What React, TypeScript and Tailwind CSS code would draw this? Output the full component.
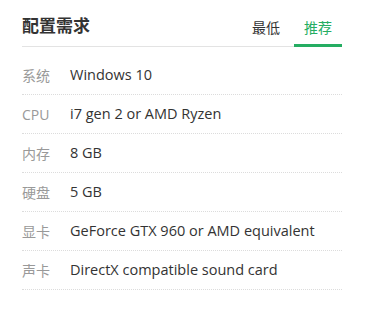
import { useState } from "react";

// System requirements card with min / recommended tabs.
const specs: [string, string][] = [
  ["系统", "Windows 10"],
  ["CPU", "i7 gen 2 or AMD Ryzen"],
  ["内存", "8 GB"],
  ["硬盘", "5 GB"],
  ["显卡", "GeForce GTX 960 or AMD equivalent"],
  ["声卡", "DirectX compatible sound card"],
];

export default function App() {
  const [tab, setTab] = useState<"min" | "rec">("rec");

  return (
    <div className="h-[319px] w-[373px] bg-white font-['Open_Sans','Noto_Sans_CJK_SC',sans-serif] text-[#333]">
      <div className="ml-[22px] w-[320px]">
        <div className="flex h-[47px] justify-between border-b border-[#e3e3e3]">
          <h2 className="pt-[14px] text-[17px] font-bold leading-[24px]">配置需求</h2>
          <div className="-mb-px flex gap-[4px] self-end">
            <button
              onClick={() => setTab("min")}
              className={`flex h-[37px] w-[48px] items-center justify-center border-b-[3px] text-[14px] ${tab === "min" ? "border-[#25ad62] text-[#25ad62]" : "border-transparent text-[#333]"}`}
            >
              最低
            </button>
            <button
              onClick={() => setTab("rec")}
              className={`flex h-[37px] w-[48px] items-center justify-center border-b-[3px] text-[14px] ${tab === "rec" ? "border-[#25ad62] text-[#25ad62]" : "border-transparent text-[#333]"}`}
            >
              推荐
            </button>
          </div>
        </div>
        <ul className="mt-[9px]">
          {specs.map(([k, v]) => (
            <li key={k} className="flex h-[39px] items-center border-b border-dotted border-[#dcdcdc] text-[14px]">
              <span className="w-[48px] text-[#999]">{k}</span>
              <span className="text-[14.5px]">{v}</span>
            </li>
          ))}
        </ul>
      </div>
    </div>
  );
}
